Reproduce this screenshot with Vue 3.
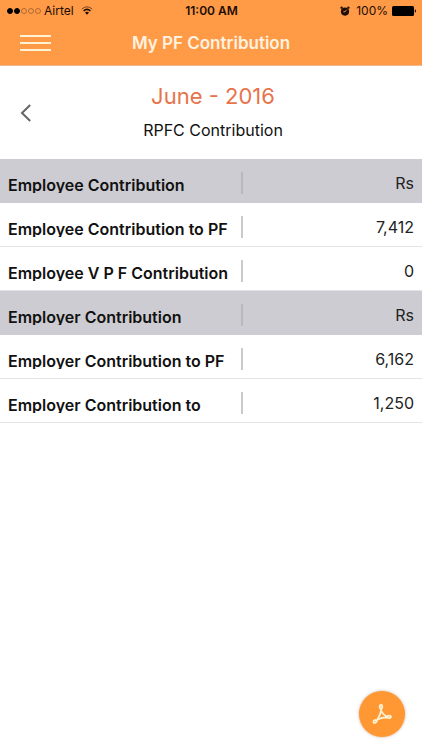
<script setup>
import { ref } from 'vue';

const month = ref('June - 2016');
const signal = 2;

const rows = ref([
  { label: 'Employee Contribution', value: 'Rs', head: true },
  { label: 'Employee Contribution to PF', value: '7,412' },
  { label: 'Employee V P F Contribution', value: '0' },
  { label: 'Employer Contribution', value: 'Rs', head: true },
  { label: 'Employer Contribution to PF', value: '6,162' },
  { label: 'Employer Contribution to', value: '1,250' },
]);
</script>

<template>
  <div class="page">
    <header class="top">
      <div class="status">
        <div class="status-left">
          <span class="dots">
            <i v-for="n in 5" :key="n" class="dot" :class="{ full: n <= signal }"></i>
          </span>
          <span>Airtel</span>
          <svg class="wifi" width="12" height="9" viewBox="0 0 12 9" fill="none" stroke="#1d0e04">
            <path d="M0.8 3.2C3.8 0.2 8.2 0.2 11.2 3.2" stroke-width="1" opacity="0.6" />
            <path d="M2.6 5C4.6 3.1 7.4 3.1 9.4 5" stroke-width="1.7" />
            <path d="M6 8.8L4 6.6C5.2 5.6 6.8 5.6 8 6.6Z" fill="#1d0e04" stroke="none" />
          </svg>
        </div>
        <span class="time">11:00 AM</span>
        <div class="status-right">
          <svg class="alarm" width="10" height="10" viewBox="0 0 10 10">
            <circle cx="5" cy="5.6" r="4.1" fill="#1d0e04" />
            <path d="M0.6 2.4L2.4 0.9M9.4 2.4L7.6 0.9" stroke="#1d0e04" stroke-width="1.6" />
            <path d="M6.6 3.8L5 5.8H3.4" fill="none" stroke="#ff9a47" stroke-width="0.9" />
          </svg>
          <span>100%</span>
          <svg width="24" height="10" viewBox="0 0 24 10">
            <rect x="0" y="0" width="22" height="10" rx="1.5" fill="#000" />
            <path d="M22.8 3.2C24.4 3.6 24.4 6.4 22.8 6.8Z" fill="#000" />
          </svg>
        </div>
      </div>
      <nav class="bar">
        <button class="menu" type="button" aria-label="Menu">
          <span></span>
          <span></span>
          <span></span>
        </button>
        <h1>My PF Contribution</h1>
      </nav>
    </header>

    <section class="month">
      <button class="back" type="button" aria-label="Previous month">
        <svg width="12" height="18" viewBox="0 0 12 18" fill="none" stroke="#666" stroke-width="2">
          <path d="M10.2 1L2 9L10.2 17" />
        </svg>
      </button>
      <div class="month-text">
        <h2>{{ month }}</h2>
        <p>RPFC Contribution</p>
      </div>
    </section>

    <table class="list">
      <tbody>
        <tr v-for="row in rows" :key="row.label" :class="{ head: row.head }">
          <th scope="row">
            <div class="cell">
              <span class="label">{{ row.label }}</span>
            </div>
          </th>
          <td>{{ row.value }}</td>
        </tr>
      </tbody>
    </table>

    <button class="pdf" type="button" aria-label="Open PDF">
      <svg width="22" height="24" viewBox="0 0 22 24" fill="none" stroke="#fff3d6" stroke-width="1.8" stroke-linejoin="round" stroke-linecap="round">
        <path d="M9.6 7C8.2 4.8 8.4 2.8 10 2.8C11.6 2.8 11.8 4.8 10.4 7C10 11 8.4 14.6 6 18.2C5.4 20.8 3.4 21.6 2.6 20.4C1.8 19 3.4 17.8 6 17.8C9 16.4 12.4 15.4 16 15.4C18.4 16.6 20 16 20 14.8C19.8 13.4 17.8 13.2 15.8 14.6C12.8 13 10.6 10.4 9.6 7Z" />
      </svg>
    </button>
  </div>
</template>

<style>
body {
  margin: 0;
  background: #fff;
}
</style>

<style scoped>
.page {
  min-height: 100vh;
  background: #fff;
  color: #111;
  font-family: Inter, "Liberation Sans", sans-serif;
}

button {
  padding: 0;
  border: 0;
  background: none;
  cursor: pointer;
}

.top {
  background: #ff9a47;
  border-bottom: 1px solid #f3b98c;
}

.status {
  display: grid;
  grid-template-columns: 1fr auto 1fr;
  align-items: center;
  height: 21px;
  padding: 0 6px 0 7px;
  font-size: 12px;
  color: #1d0e04;
}

.status-left,
.status-right {
  display: flex;
  align-items: center;
}

.status-left {
  gap: 3px;
}

.status-right {
  justify-content: flex-end;
  gap: 4px;
}

.dots {
  display: flex;
  gap: 1px;
}

.dot {
  box-sizing: border-box;
  width: 6px;
  height: 6px;
  border: 1px solid #b06a32;
  border-radius: 50%;
}

.dot.full {
  border-color: #000;
  background: #000;
}

.wifi {
  margin-left: 4px;
}

.alarm {
  margin-right: 2px;
}

.time {
  font-weight: 600;
}

.bar {
  display: grid;
  grid-template-columns: 52px 1fr 52px;
  align-items: center;
  height: 44px;
}

.menu {
  display: flex;
  flex-direction: column;
  gap: 5px;
  padding-left: 20px;
}

.menu span {
  width: 31px;
  height: 2px;
  background: #fff3d6;
}

h1 {
  margin: 0;
  text-align: center;
  font-size: 17px;
  font-weight: 600;
  line-height: 20px;
  color: #fff3e0;
}

.month {
  display: grid;
  grid-template-columns: 52px 1fr 48px;
  align-items: center;
  padding: 16px 0;
}

.back {
  display: flex;
  padding: 8px 20px;
}

.month-text {
  text-align: center;
}

h2 {
  margin: 0;
  font-size: 22px;
  font-weight: 400;
  line-height: 28px;
  color: #e8734a;
}

p {
  margin: 8px 0 0;
  font-size: 16px;
  line-height: 25px;
}

.list {
  width: 100%;
  border-collapse: separate;
  border-spacing: 0;
  table-layout: fixed;
}

th,
td {
  box-sizing: border-box;
  height: 44px;
  border-bottom: 1px solid #e4e4e6;
}

.head th,
.head td {
  background: #cdccd2;
  border-color: #cdccd2;
}

th {
  width: 57.5%;
  padding: 4px 0 0;
  text-align: left;
}

.cell {
  height: 22px;
  padding-left: 8px;
  border-right: 2px solid #cbcbcd;
}

.head .cell {
  border-color: #b9b8bd;
}

.label {
  display: block;
  height: 21px;
  overflow: hidden;
  white-space: nowrap;
  font-size: 16px;
  font-weight: 600;
  line-height: 26px;
}

td {
  padding: 4px 8px 0 0;
  text-align: right;
  font-size: 16px;
  color: #222;
}

.pdf {
  position: fixed;
  right: 17px;
  bottom: 13px;
  display: flex;
  align-items: center;
  justify-content: center;
  width: 46px;
  height: 46px;
  border-radius: 50%;
  background: #ff9833;
  box-shadow: 0 0 3px rgba(150, 90, 60, 0.5);
}
</style>
